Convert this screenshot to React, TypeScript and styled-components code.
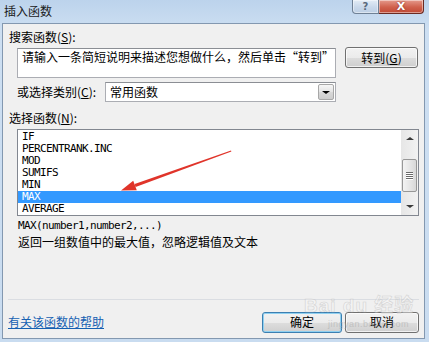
import React from "react";
import styled, { createGlobalStyle } from "styled-components";

const Global = createGlobalStyle`
  html, body { margin: 0; padding: 0; background: #c9dcf0; }
  * { box-sizing: border-box; }
`;

const CJK = `"Noto Sans CJK SC", "Noto Sans", sans-serif`;
const MONO = `"DejaVu Sans Mono", "Liberation Mono", monospace`;

const Window = styled.div`
  position: relative;
  width: 429px;
  height: 342px;
  overflow: hidden;
  background: linear-gradient(#bcd3ec 0px, #cddff2 30px, #c9dcf0 100%);
  display: flex;
  flex-direction: column;
  font-family: ${CJK};
  font-size: 12px;
  color: #000;
`;

const TitleBar = styled.div`
  height: 23px;
  display: flex;
  align-items: flex-start;
  justify-content: space-between;
  padding: 0 5px 0 4px;
`;

const Title = styled.div`
  line-height: 21px;
  font-size: 12px;
  color: #1b1b1b;
`;

const Controls = styled.div`
  display: flex;
`;

const CtlButton = styled.div<{ $close?: boolean }>`
  width: ${(p) => (p.$close ? 45 : 27)}px;
  height: 14px;
  display: flex;
  align-items: center;
  justify-content: center;
  border: 1px solid ${(p) => (p.$close ? "#6b2a22" : "#6f8196")};
  border-top: none;
  border-left-width: ${(p) => (p.$close ? 0 : 1)}px;
  border-radius: ${(p) => (p.$close ? "0 0 4px 0" : "0 0 0 4px")};
  background: ${(p) =>
    p.$close
      ? "linear-gradient(#e59a8c, #d0604c 55%, #c04a36)"
      : "linear-gradient(#e3ecf6, #c9d8ea 55%, #bccfe5)"};
  color: ${(p) => (p.$close ? "#fff" : "#5a6a7c")};
  font-family: "DejaVu Sans", sans-serif;
  font-weight: bold;
  font-size: ${(p) => (p.$close ? 11 : 10)}px;
  line-height: 1;
  box-shadow: inset 0 0 0 1px rgba(255, 255, 255, 0.45);
  text-shadow: ${(p) => (p.$close ? "0 0 2px #7a2016" : "none")};
`;

const Body = styled.div`
  margin: 0 4px 3px 2px;
  height: 316px;
  border: 1px solid #8398b0;
  background: #f0f0f0;
  display: flex;
  flex-direction: column;
`;

const Label = styled.div<{ $top: number; $indent?: number }>`
  margin-top: ${(p) => p.$top}px;
  padding-left: ${(p) => p.$indent ?? 6}px;
  line-height: 14px;
  height: 14px;
  white-space: nowrap;
`;

const Acc = styled.span`
  text-decoration: underline;
`;

const Row = styled.div<{ $top: number }>`
  margin-top: ${(p) => p.$top}px;
  padding-left: 14px;
  display: flex;
  align-items: flex-start;
`;

const SearchBox = styled.div`
  margin-top: 1px;
  width: 319px;
  height: 30px;
  background: #fff;
  border: 1px solid #abadb3;
  border-top-color: #8b8e94;
  padding: 1px 4px;
  line-height: 14px;
  white-space: nowrap;
  overflow: hidden;
`;

const PushButton = styled.div<{ $w: number; $default?: boolean }>`
  width: ${(p) => p.$w}px;
  height: 21px;
  border: 1px solid ${(p) => (p.$default ? "#3c7fb1" : "#707070")};
  border-radius: 3px;
  background: linear-gradient(#f2f2f2 0%, #ebebeb 50%, #dddddd 51%, #cfcfcf 100%);
  box-shadow: inset 0 0 0 1px
    ${(p) => (p.$default ? "#8fd0f0" : "rgba(255,255,255,0.7)")};
  display: flex;
  align-items: center;
  justify-content: center;
  line-height: 14px;
  white-space: nowrap;
`;

const SearchButton = styled(PushButton)`
  margin-left: 9px;
`;

const CategoryRow = styled(Row)`
  align-items: center;
`;

const CategoryLabel = styled.div`
  width: 88px;
  line-height: 14px;
  white-space: nowrap;
`;

const Select = styled.div`
  width: 231px;
  height: 20px;
  background: #fff;
  border: 1px solid #abadb3;
  border-top-color: #8b8e94;
  display: flex;
  align-items: center;
  justify-content: space-between;
  padding-left: 4px;
  line-height: 14px;
`;

const DropButton = styled.div`
  width: 16px;
  height: 16px;
  margin-right: 1px;
  border: 1px solid #a7a7a7;
  border-radius: 2px;
  background: linear-gradient(#f6f6f6, #e4e4e4 50%, #d8d8d8 51%, #cdcdcd);
  display: flex;
  align-items: center;
  justify-content: center;
`;

const Triangle = styled.div<{ $up?: boolean; $size?: number; $color?: string }>`
  width: 0;
  height: 0;
  border-left: ${(p) => p.$size ?? 4}px solid transparent;
  border-right: ${(p) => p.$size ?? 4}px solid transparent;
  ${(p) =>
    p.$up
      ? `border-bottom: ${(p.$size ?? 4) - 1}px solid ${p.$color ?? "#000"};`
      : `border-top: ${(p.$size ?? 4) - 1}px solid ${p.$color ?? "#000"};`}
`;

const ListBox = styled.div`
  margin: 4px 0 0 14px;
  width: 402px;
  height: 87px;
  border: 1px solid #828790;
  background: #fff;
  display: flex;
`;

const Rows = styled.div`
  flex: 1;
  padding-top: 1px;
  display: flex;
  flex-direction: column;
`;

const ListRow = styled.div<{ $selected?: boolean }>`
  height: 12px;
  line-height: 12px;
  padding-left: 4px;
  font-family: ${MONO};
  font-size: 11px;
  letter-spacing: -0.62px;
  background: ${(p) => (p.$selected ? "#3399ff" : "transparent")};
  color: ${(p) => (p.$selected ? "#fff" : "#000")};
  white-space: nowrap;
`;

const ScrollBar = styled.div`
  width: 17px;
  background: linear-gradient(90deg, #e6e6e6, #f2f2f2);
  display: flex;
  flex-direction: column;
`;

const ScrollArrow = styled.div`
  height: 17px;
  display: flex;
  align-items: center;
  justify-content: center;
`;

const Track = styled.div`
  flex: 1;
  display: flex;
  flex-direction: column;
  align-items: center;
`;

const Thumb = styled.div`
  margin-top: 12px;
  width: 15px;
  height: 33px;
  border: 1px solid #979797;
  border-radius: 2px;
  background: linear-gradient(90deg, #f3f3f3, #e6e6e6 50%, #d8d8d8);
  display: flex;
  flex-direction: column;
  align-items: center;
  justify-content: center;
  gap: 1px;
`;

const Grip = styled.div`
  width: 7px;
  height: 1px;
  background: #6a6a6a;
  box-shadow: 0 1px 0 #fff;
`;

const Syntax = styled.div`
  margin-top: 4px;
  padding-left: 15px;
  height: 12px;
  line-height: 12px;
  font-family: ${MONO};
  font-size: 11px;
  letter-spacing: -0.62px;
  white-space: nowrap;
`;

const Description = styled.div`
  margin-top: 2px;
  padding-left: 15px;
  height: 16px;
  line-height: 16px;
  font-size: 12px;
  white-space: nowrap;
`;

const Spacer = styled.div`
  flex: 1;
`;

const Separator = styled.div`
  margin: 0 5px 0 5px;
  height: 1px;
  background: #dadde2;
`;

const Footer = styled.div`
  margin: 12px 0 6px 0;
  padding: 0 5px 0 5px;
  height: 20px;
  display: flex;
  align-items: center;
`;

const HelpLink = styled.a`
  color: #1560b2;
  text-decoration: underline;
  line-height: 14px;
  cursor: pointer;
`;

const FooterButtons = styled.div`
  margin-left: auto;
  display: flex;
  gap: 3px;
`;

const ArrowLayer = styled.svg`
  position: absolute;
  left: 0;
  top: 0;
  pointer-events: none;
`;

const Watermark = styled.div`
  position: absolute;
  left: 304px;
  top: 296px;
  pointer-events: none;
  display: flex;
  flex-direction: column;
  align-items: flex-start;
  opacity: 0.5;
`;

const WmMain = styled.div`
  font-family: "Liberation Sans", ${CJK};
  font-size: 19px;
  font-weight: bold;
  color: #f6f6f6;
  -webkit-text-stroke: 0.6px #b9b9b9;
  line-height: 20px;
  letter-spacing: 1px;
`;

const WmSub = styled.div`
  font-family: "Liberation Sans", sans-serif;
  font-size: 9px;
  color: #a8a8a8;
  line-height: 10px;
  margin-left: 24px;
  margin-top: 3px;
  letter-spacing: 0.5px;
`;

const functions = ["IF", "PERCENTRANK.INC", "MOD", "SUMIFS", "MIN", "MAX", "AVERAGE"];

export default function App() {
  return (
    <>
      <Global />
      <Window>
        <TitleBar>
          <Title>插入函数</Title>
          <Controls>
            <CtlButton>?</CtlButton>
            <CtlButton $close>X</CtlButton>
          </Controls>
        </TitleBar>
        <Body>
          <Label $top={6}>
            搜索函数(<Acc>S</Acc>):
          </Label>
          <Row $top={3}>
            <SearchBox>请输入一条简短说明来描述您想做什么，然后单击“转到”</SearchBox>
            <SearchButton $w={73}>
              转到(<Acc>G</Acc>)
            </SearchButton>
          </Row>
          <CategoryRow $top={4}>
            <CategoryLabel>
              或选择类别(<Acc>C</Acc>):
            </CategoryLabel>
            <Select>
              <span>常用函数</span>
              <DropButton>
                <Triangle $size={4} />
              </DropButton>
            </Select>
          </CategoryRow>
          <Label $top={9}>
            选择函数(<Acc>N</Acc>):
          </Label>
          <ListBox>
            <Rows>
              {functions.map((f) => (
                <ListRow key={f} $selected={f === "MAX"}>
                  {f}
                </ListRow>
              ))}
            </Rows>
            <ScrollBar>
              <ScrollArrow>
                <Triangle $up $size={4} $color="#3a3a3a" />
              </ScrollArrow>
              <Track>
                <Thumb>
                  <Grip />
                  <Grip />
                  <Grip />
                  <Grip />
                </Thumb>
              </Track>
              <ScrollArrow>
                <Triangle $size={4} $color="#3a3a3a" />
              </ScrollArrow>
            </ScrollBar>
          </ListBox>
          <Syntax>MAX(number1,number2,...)</Syntax>
          <Description>返回一组数值中的最大值，忽略逻辑值及文本</Description>
          <Spacer />
          <Separator />
          <Footer>
            <HelpLink>有关该函数的帮助</HelpLink>
            <FooterButtons>
              <PushButton $w={80} $default>
                确定
              </PushButton>
              <PushButton $w={74}>取消</PushButton>
            </FooterButtons>
          </Footer>
        </Body>
        <Watermark>
          <WmMain>Bai du 经验</WmMain>
          <WmSub>jingyan.baidu.com</WmSub>
        </Watermark>
        <ArrowLayer width={429} height={342} viewBox="0 0 429 342">
          <polygon
            points="231,150.5 231.4,151.6 135.6,186.9 134.6,184.1"
            fill="#e0342a"
          />
          <polygon points="121,190.5 133.2,180.8 136.8,190.2" fill="#e0342a" />
        </ArrowLayer>
      </Window>
    </>
  );
}
